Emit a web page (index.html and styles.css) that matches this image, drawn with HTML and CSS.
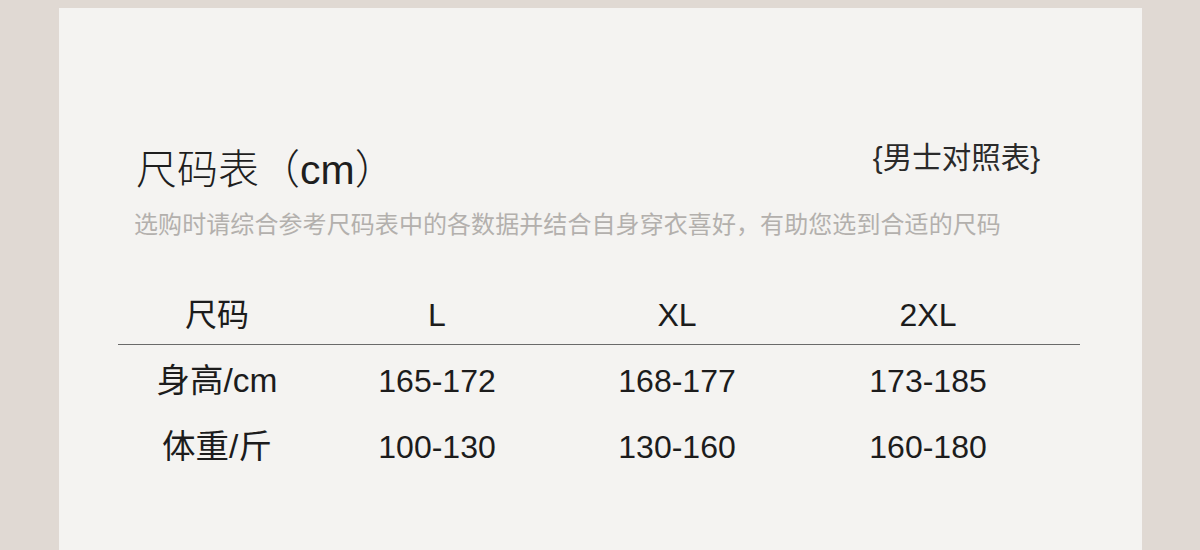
FILE: index.html
```html
<!DOCTYPE html>
<html lang="zh-CN">
<head>
<meta charset="utf-8">
<link rel="stylesheet" href="styles.css">
</head>
<body>
<div class="card">
  <div class="head">
    <h1 class="title">尺码表（cm）</h1>
    <div class="tag">{男士对照表}</div>
  </div>
  <p class="sub">选购时请综合参考尺码表中的各数据并结合自身穿衣喜好，有助您选到合适的尺码</p>
  <div class="table">
    <div class="row row-head">
      <div>尺码</div><div>L</div><div>XL</div><div>2XL</div><div></div>
    </div>
    <div class="row row-first">
      <div class="label">身高/cm</div><div>165-172</div><div>168-177</div><div>173-185</div><div></div>
    </div>
    <div class="row">
      <div class="label">体重/斤</div><div>100-130</div><div>130-160</div><div>160-180</div><div></div>
    </div>
  </div>
</div>
</body>
</html>
```
FILE: styles.css
```css
html, body {
  margin: 0;
  padding: 0;
}
body {
  background: #e0d9d3;
  font-family: "Liberation Sans", "Noto Sans CJK SC", sans-serif;
  color: #1c1c1c;
  height: 550px;
  overflow: hidden;
}
.card {
  margin: 8px 58px 0 59px;
  height: 542px;
  background: #f4f3f1;
  box-sizing: border-box;
  padding-top: 136px;
}
.head {
  display: flex;
  justify-content: space-between;
  align-items: flex-start;
  padding: 0 102px 0 77px;
}
.title {
  margin: 6px 0 0;
  font-size: 41px;
  line-height: 41px;
  font-weight: 300;
  color: #1e1e1e;
  font-family: "Liberation Sans", "Noto Sans CJK SC", sans-serif;
}
.tag {
  font-size: 29.5px;
  line-height: 28px;
  color: #2a2a2a;
  font-family: "Liberation Sans", "Noto Sans CJK SC", sans-serif;
}
.sub {
  margin: 20px 0 0 75px;
  font-size: 24px;
  line-height: 24px;
  color: #b3b0ad;
  font-family: "Noto Sans CJK SC", sans-serif;
  letter-spacing: 0.08px;
}
.table {
  margin: 51px 0 0 59px;
  width: 962px;
}
.row {
  display: grid;
  grid-template-columns: 198px 242px 238px 264px 1fr;
  height: 66px;
  align-items: center;
  font-size: 32px;
  line-height: 32px;
  text-align: center;
}
.row .label {
  font-size: 33.5px;
}
.row-head {
  height: 58px;
  border-bottom: 1px solid #6a6a6a;
}
.row-first {
  margin-top: 3px;
}
```
